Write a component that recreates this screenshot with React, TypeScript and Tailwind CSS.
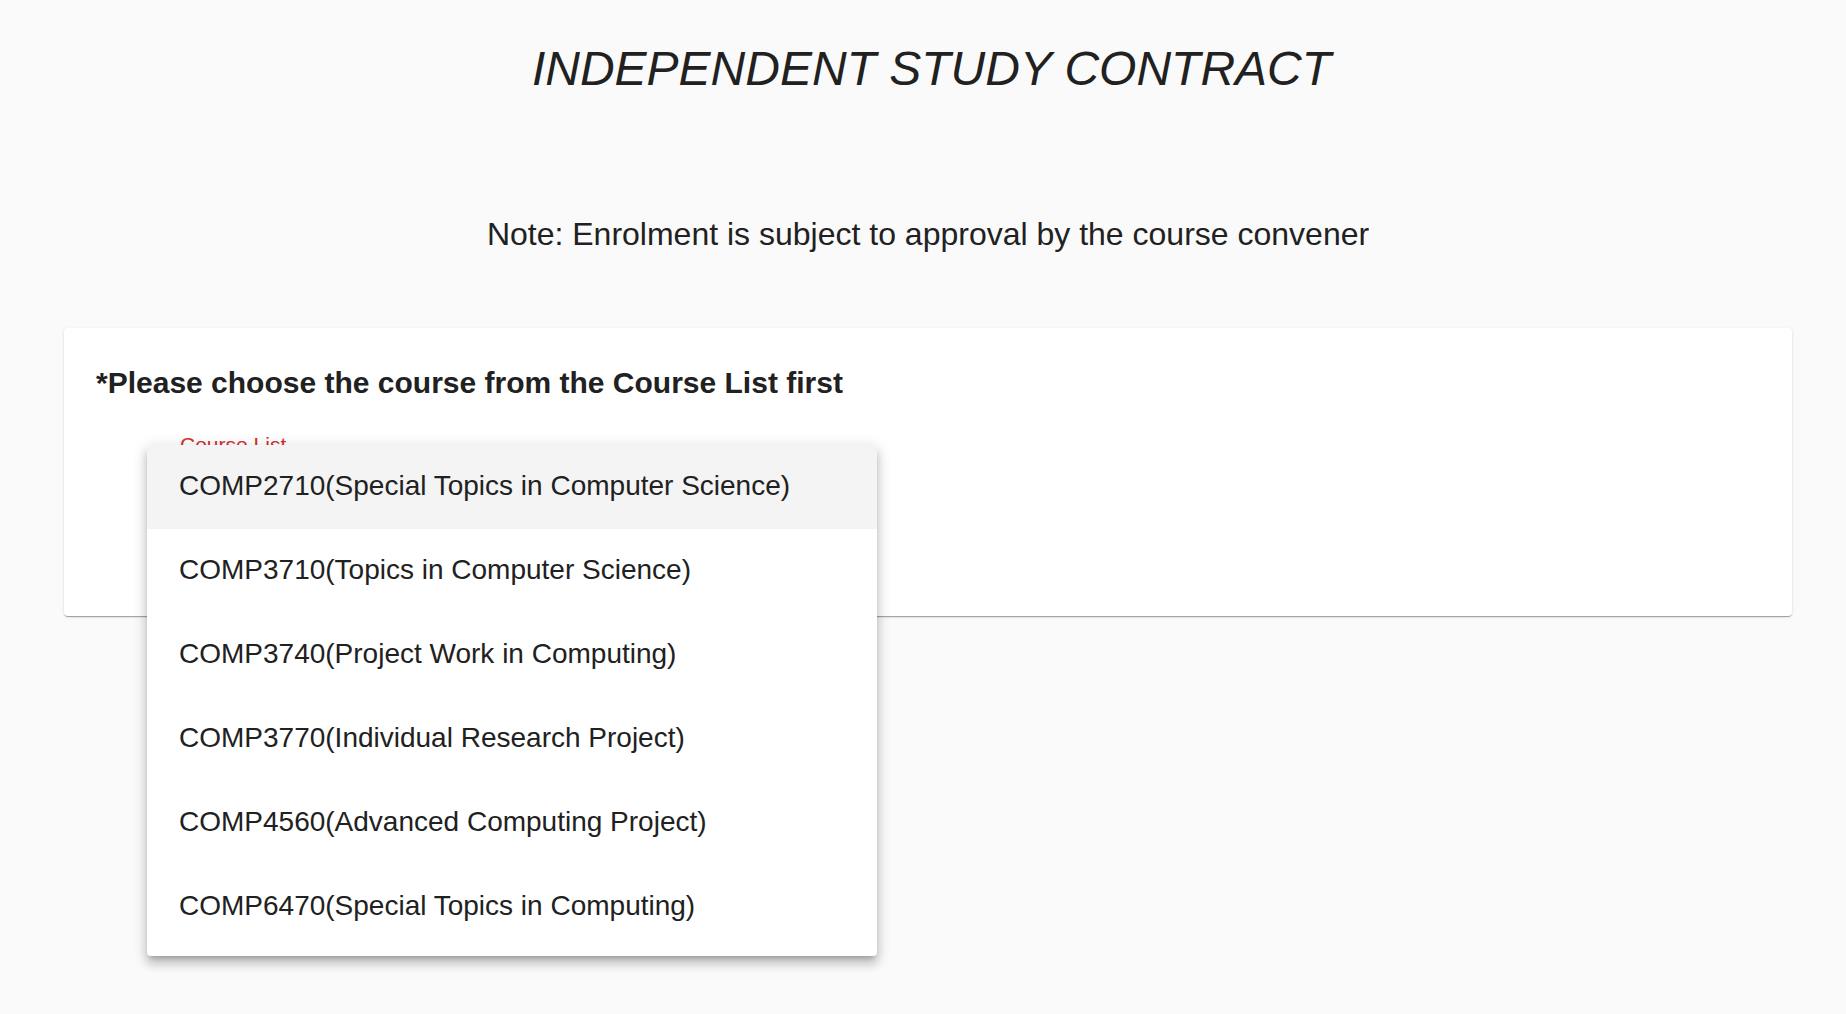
import React from "react";

const courses = [
  "COMP2710(Special Topics in Computer Science)",
  "COMP3710(Topics in Computer Science)",
  "COMP3740(Project Work in Computing)",
  "COMP3770(Individual Research Project)",
  "COMP4560(Advanced Computing Project)",
  "COMP6470(Special Topics in Computing)",
];

const CourseMenu = () => {
  return (
    <div className="absolute left-[83px] top-[117px] w-[730px] rounded bg-white pb-[7px] shadow-[0px_5px_5px_-3px_rgba(0,0,0,0.2),0px_8px_10px_1px_rgba(0,0,0,0.14),0px_3px_14px_2px_rgba(0,0,0,0.12)]">
      {courses.map((c, i) => (
        <div
          key={c}
          className={
            i === 0
              ? "flex h-[84px] items-center bg-[#f4f4f4] pb-[2px] pl-[32px] text-[28px] leading-none"
              : "flex h-[84px] items-center pb-[2px] pl-[32px] text-[28px] leading-none"
          }
        >
          {c}
        </div>
      ))}
    </div>
  );
};

export default function App() {
  return (
    <div className="min-h-screen bg-[#fafafa] font-['Liberation_Sans',Arial,sans-serif] text-[#212121]">
      <div className="ml-[64px] mr-[54px]">
        <h1 className="pl-[7px] pt-[45px] text-center text-[48px] font-normal italic leading-none">
          INDEPENDENT STUDY CONTRACT
        </h1>
        <p className="mt-[125px] text-center text-[32px] leading-none">
          Note: Enrolment is subject to approval by the course convener
        </p>

        <div className="relative mt-[78px] h-[288px] rounded bg-white pl-[32px] pt-[40px] shadow-[0px_2px_1px_-1px_rgba(0,0,0,0.2),0px_1px_1px_0px_rgba(0,0,0,0.14),0px_1px_3px_0px_rgba(0,0,0,0.12)]">
          <h2 className="text-[30px] font-bold leading-none">
            *Please choose the course from the Course List first
          </h2>
          <div className="ml-[84px] mt-[36px] w-[690px]">
            <div className="text-[21px] leading-none text-[#d32f2f]">Course List</div>
            <div className="mt-[8px] flex h-[46px] items-center border-b-2 border-[#d32f2f] text-[28px]">
              <span className="flex-1"></span>
              <svg width="24" height="24" viewBox="0 0 24 24" className="fill-[#757575]">
                <path d="M7 10l5 5 5-5z" />
              </svg>
            </div>
          </div>
          <CourseMenu />
        </div>
      </div>
    </div>
  );
}
